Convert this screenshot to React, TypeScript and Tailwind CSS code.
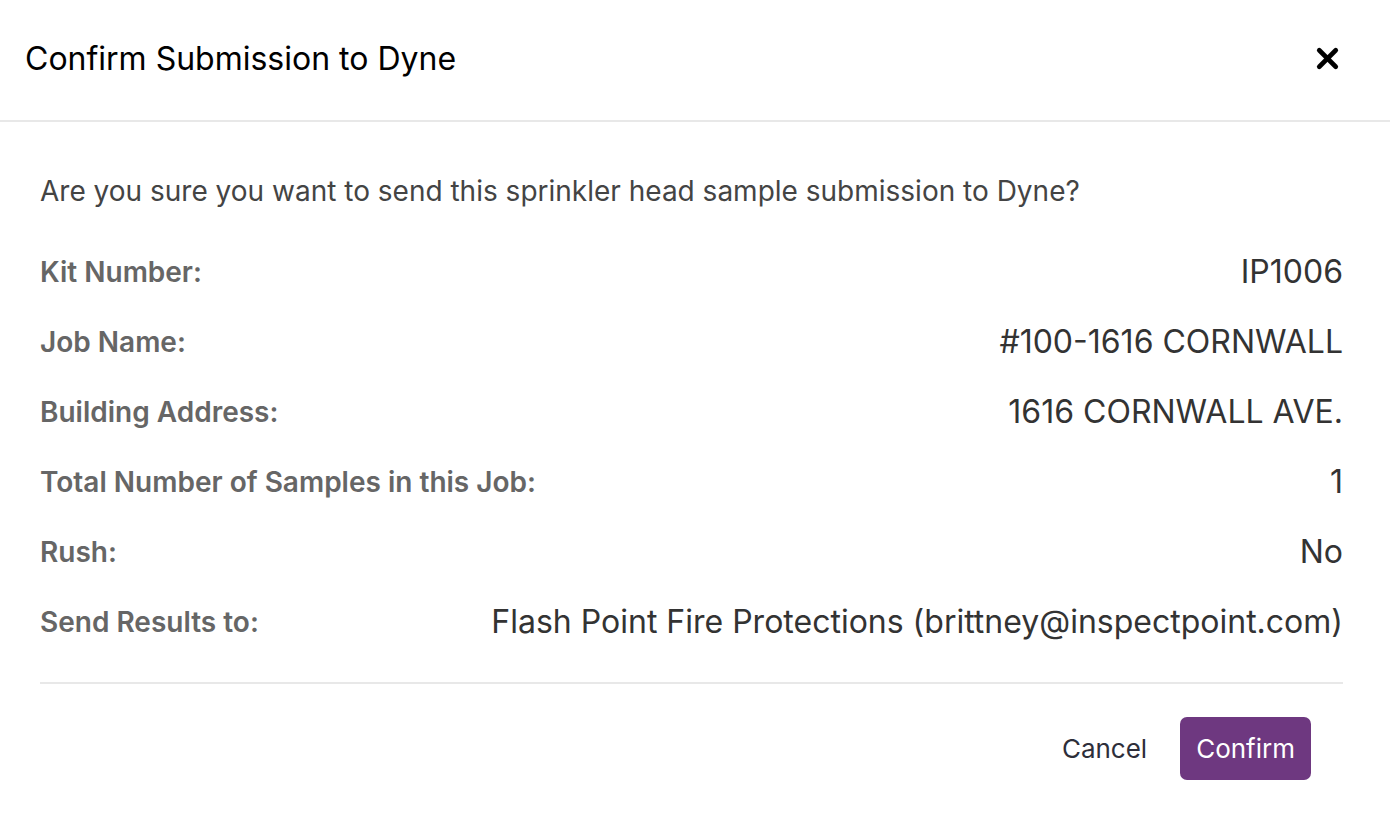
import { X } from 'lucide-react';

const rows = [
  { label: 'Kit Number:', value: 'IP1006' },
  { label: 'Job Name:', value: '#100-1616 CORNWALL' },
  { label: 'Building Address:', value: '1616 CORNWALL AVE.' },
  { label: 'Total Number of Samples in this Job:', value: '1' },
  { label: 'Rush:', value: 'No' },
  { label: 'Send Results to:', value: 'Flash Point Fire Protections (brittney@inspectpoint.com)' },
];

export default function App() {
  return (
    <div className="w-[1390px] h-[822px] bg-white overflow-hidden" style={{ fontFamily: 'Inter, "Noto Sans", sans-serif' }}>
      <div className="h-[122px] flex items-center justify-between pl-[25px] pr-[46px] border-b-2 border-[#e8e8e8]">
        <h1 className="text-[32px] text-black leading-none -mt-[3px]">Confirm Submission to Dyne</h1>
        <button className="text-black -mt-[4px]">
          <X size={33} strokeWidth={3.4} />
        </button>
      </div>

      <div className="pl-[40px] pr-[47px]">
        <p className="text-[28px] text-[#444] leading-none mt-[55px]">
          Are you sure you want to send this sprinkler head sample submission to Dyne?
        </p>

        <div className="mt-[50px] flex flex-col gap-[36px]">
          {rows.map((row) => (
            <div key={row.label} className="flex items-center justify-between h-[34px]">
              <span className="text-[28px] font-semibold text-[#666]">{row.label}</span>
              <span className="text-[32px] text-[#333]">{row.value}</span>
            </div>
          ))}
        </div>

        <div className="mt-[43px] border-t-2 border-[#e8e8e8]" />

        <div className="flex justify-end items-center gap-[33px] pr-[32px] mt-[33px]">
          <button className="text-[26px] text-[#2e2e3a]">Cancel</button>
          <button className="h-[63px] px-[16px] rounded-[7px] bg-[#6e3880] text-white text-[26px]">Confirm</button>
        </div>
      </div>
    </div>
  );
}
